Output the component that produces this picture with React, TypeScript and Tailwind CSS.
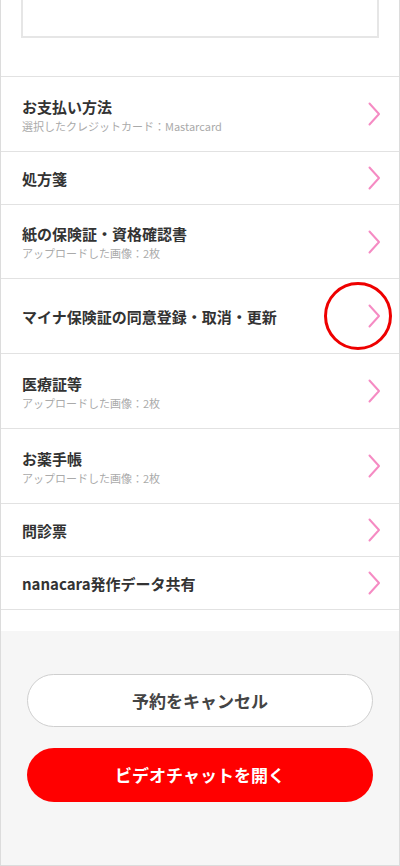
import React from 'react';

type Row = {
  title: string;
  sub?: string;
  h: string;
};

// 一覧の各行（高さはスクリーンショットに合わせる）
const rows: Row[] = [
  { title: 'お支払い方法', sub: '選択したクレジットカード：Mastarcard', h: 'h-[75px]' },
  { title: '処方箋', h: 'h-[53px]' },
  { title: '紙の保険証・資格確認書', sub: 'アップロードした画像：2枚', h: 'h-[74px]' },
  { title: 'マイナ保険証の同意登録・取消・更新', h: 'h-[75px]' },
  { title: '医療証等', sub: 'アップロードした画像：2枚', h: 'h-[75px]' },
  { title: 'お薬手帳', sub: 'アップロードした画像：2枚', h: 'h-[75px]' },
  { title: '問診票', h: 'h-[53px]' },
  { title: 'nanacara発作データ共有', h: 'h-[53px]' },
];

function Chevron() {
  return (
    <svg width="13" height="24" viewBox="0 0 13 24" fill="none" className="shrink-0">
      <path d="M1.5 1.5 L11 12 L1.5 22.5" stroke="#f58bc3" strokeWidth="2" strokeLinecap="round" strokeLinejoin="round" />
    </svg>
  );
}

function ListRow({ row }: { row: Row }) {
  return (
    <div className={`${row.h} border-t border-[#e2e2e2] flex items-center justify-between pl-[21px] pr-[18px]`}>
      <div className="flex flex-col pt-[2px]">
        <span className="text-[15px] leading-[20px] font-bold text-[#333]">{row.title}</span>
        {row.sub && <span className="text-[11px] leading-[16px] text-[#aaa] mt-[1px]">{row.sub}</span>}
      </div>
      <Chevron />
    </div>
  );
}

export default function App() {
  return (
    <div
      className="relative w-[400px] h-[866px] border-x border-b border-[#dcdcdc] bg-white flex flex-col overflow-hidden"
      style={{ fontFamily: '"Noto Sans CJK JP", "Noto Sans", sans-serif' }}
    >
      {/* 上部の入力欄（途中から表示） */}
      <div className="h-[76px] shrink-0 px-[20px]">
        <div className="h-[38px] border-2 border-t-0 border-[#e6e6e6]" />
      </div>

      <div className="border-b border-[#e2e2e2]">
        {rows.map((r) => (
          <ListRow key={r.title} row={r} />
        ))}
      </div>

      <div className="h-[21px] shrink-0" />

      <div className="flex-1 bg-[#f6f6f6] px-[26px] pt-[43px] flex flex-col gap-[21px]">
        <button className="h-[53px] w-full rounded-full border border-[#cfcfcf] bg-white text-[17px] font-bold text-[#444]">
          予約をキャンセル
        </button>
        <button className="h-[54px] w-full rounded-full bg-[#ff0000] text-[17px] font-bold text-white">
          ビデオチャットを開く
        </button>
      </div>

      {/* 注釈の赤丸 */}
      <div className="absolute left-[323px] top-[282px] w-[68px] h-[68px] rounded-full border-[3px] border-[#ee0000]" />
    </div>
  );
}
